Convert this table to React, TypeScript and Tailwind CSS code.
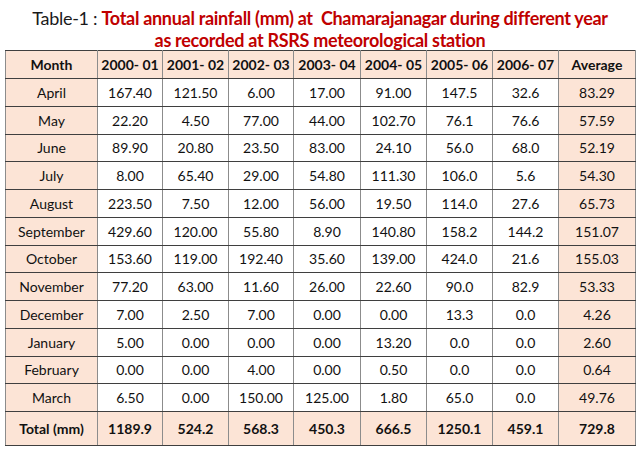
const years = ["2000- 01", "2001- 02", "2002- 03", "2003- 04", "2004- 05", "2005- 06", "2006- 07"];

const rows: [string, string[], string][] = [
  ["April", ["167.40", "121.50", "6.00", "17.00", "91.00", "147.5", "32.6"], "83.29"],
  ["May", ["22.20", "4.50", "77.00", "44.00", "102.70", "76.1", "76.6"], "57.59"],
  ["June", ["89.90", "20.80", "23.50", "83.00", "24.10", "56.0", "68.0"], "52.19"],
  ["July", ["8.00", "65.40", "29.00", "54.80", "111.30", "106.0", "5.6"], "54.30"],
  ["August", ["223.50", "7.50", "12.00", "56.00", "19.50", "114.0", "27.6"], "65.73"],
  ["September", ["429.60", "120.00", "55.80", "8.90", "140.80", "158.2", "144.2"], "151.07"],
  ["October", ["153.60", "119.00", "192.40", "35.60", "139.00", "424.0", "21.6"], "155.03"],
  ["November", ["77.20", "63.00", "11.60", "26.00", "22.60", "90.0", "82.9"], "53.33"],
  ["December", ["7.00", "2.50", "7.00", "0.00", "0.00", "13.3", "0.0"], "4.26"],
  ["January", ["5.00", "0.00", "0.00", "0.00", "13.20", "0.0", "0.0"], "2.60"],
  ["February", ["0.00", "0.00", "4.00", "0.00", "0.50", "0.0", "0.0"], "0.64"],
  ["March", ["6.50", "0.00", "150.00", "125.00", "1.80", "65.0", "0.0"], "49.76"],
];

const totals = ["1189.9", "524.2", "568.3", "450.3", "666.5", "1250.1", "459.1"];

const cell = "border-y border-y-[#3f3f3f] border-x border-x-[#8c8c8c] text-center p-0";
const peach = "bg-[#fce4d6]";

export default function App() {
  return (
    <div className="w-[640px] h-[450px] bg-white overflow-hidden" style={{ fontFamily: "Lato, 'Open Sans', sans-serif" }}>
      <div className="pt-[7px] text-center text-[18px] leading-[22px] tracking-[-0.3px]">
        <div>
          <span className="text-[#1a1a1a]">Table-1 : </span>
          <span className="font-bold text-[#c00000]">Total annual rainfall (mm) at&nbsp; Chamarajanagar during different year</span>
        </div>
        <div className="font-bold text-[#c00000]">as recorded at RSRS meteorological station</div>
      </div>
      <table className="ml-[5px] mt-[-1px] border-collapse table-fixed text-[14px] text-[#111] border border-[#3f3f3f]">
        <colgroup>
          <col className="w-[92px]" />
          <col className="w-[65px]" />
          <col className="w-[66px]" />
          <col className="w-[65px]" />
          <col className="w-[67px]" />
          <col className="w-[66px]" />
          <col className="w-[66px]" />
          <col className="w-[66px]" />
          <col className="w-[77px]" />
        </colgroup>
        <thead>
          <tr className={`h-[28px] font-bold ${peach}`}>
            <th className={cell}>Month</th>
            {years.map((y) => (
              <th key={y} className={cell}>{y}</th>
            ))}
            <th className={cell}>Average</th>
          </tr>
        </thead>
        <tbody>
          {rows.map(([m, vals, avg]) => (
            <tr key={m} className="h-[27.75px]">
              <td className={`${cell} ${peach}`}>{m}</td>
              {vals.map((v, i) => (
                <td key={i} className={cell}>{v}</td>
              ))}
              <td className={`${cell} ${peach}`}>{avg}</td>
            </tr>
          ))}
          <tr className={`h-[34px] font-bold ${peach}`}>
            <td className={cell}>Total (mm)</td>
            {totals.map((t, i) => (
              <td key={i} className={cell}>{t}</td>
            ))}
            <td className={cell}>729.8</td>
          </tr>
        </tbody>
      </table>
    </div>
  );
}
